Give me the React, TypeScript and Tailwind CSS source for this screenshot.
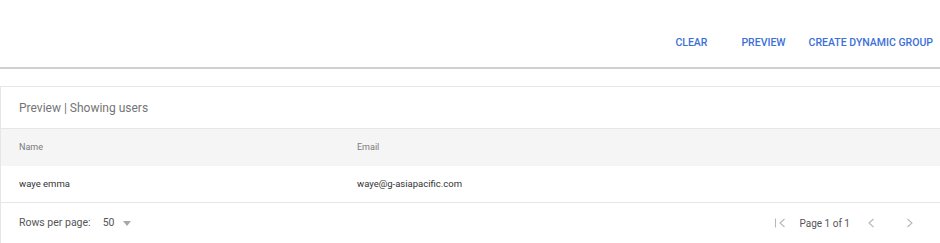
const Chevron = ({ dir }: { dir: 'left' | 'right' }) => (
  <svg width="8" height="10" viewBox="0 0 8 10" fill="none" stroke="#b8b8b8" strokeWidth="1.1">
    {dir === 'left' ? <path d="M6.5 1 2 5l4.5 4" /> : <path d="M1.5 1 6 5 1.5 9" />}
  </svg>
)

const FirstPage = () => (
  <svg width="12" height="10" viewBox="0 0 12 10" fill="none" stroke="#b8b8b8" strokeWidth="1.1">
    <path d="M1.5 0.5v9" />
    <path d="M10.5 1 6 5l4.5 4" />
  </svg>
)

const App = () => {
  const users = [{ name: 'waye emma', email: 'waye@g-asiapacific.com' }]

  return (
    <div className="w-[940px] h-[243px] bg-white overflow-hidden font-['Roboto',sans-serif]">
      <div className="h-[69px] border-b-2 border-[#cfcfcf] flex items-center justify-end pt-[19px] pr-[7px] text-[10.5px] font-medium text-[#3c6fd8]">
        <button>CLEAR</button>
        <button className="ml-[34px]">PREVIEW</button>
        <button className="ml-[23px]">CREATE DYNAMIC GROUP</button>
      </div>

      <div className="mt-[17px] border-t border-l border-[#e6e6e6]">
        <div className="h-[41px] flex items-center px-[18px] text-[12px] text-[#757575]">Preview | Showing users</div>

        <div className="h-[38px] bg-[#f5f5f5] border-t border-[#e6e6e6] flex items-center px-[18px] text-[9px] text-[#7a7a7a]">
          <div className="w-[338px]">Name</div>
          <div>Email</div>
        </div>

        {users.map(u => (
          <div
            key={u.email}
            className="h-[37px] border-b border-[#e6e6e6] flex items-center px-[18px] text-[9.5px] text-[#333]"
          >
            <div className="w-[338px]">{u.name}</div>
            <div>{u.email}</div>
          </div>
        ))}

        <div className="h-[40px] flex items-center px-[18px] text-[10.5px] text-[#555]">
          <span>Rows per page:</span>
          <span className="ml-[12px]">50</span>
          <span className="ml-[9px] w-0 h-0 border-l-[4px] border-r-[4px] border-t-[5px] border-l-transparent border-r-transparent border-t-[#a8a8a8]" />

          <div className="ml-auto flex items-center mr-[8px]">
            <FirstPage />
            <span className="ml-[14px] mr-[17px] text-[10px]">Page 1 of 1</span>
            <Chevron dir="left" />
            <span className="w-[31px]" />
            <Chevron dir="right" />
          </div>
        </div>
      </div>
    </div>
  )
}

export default App
